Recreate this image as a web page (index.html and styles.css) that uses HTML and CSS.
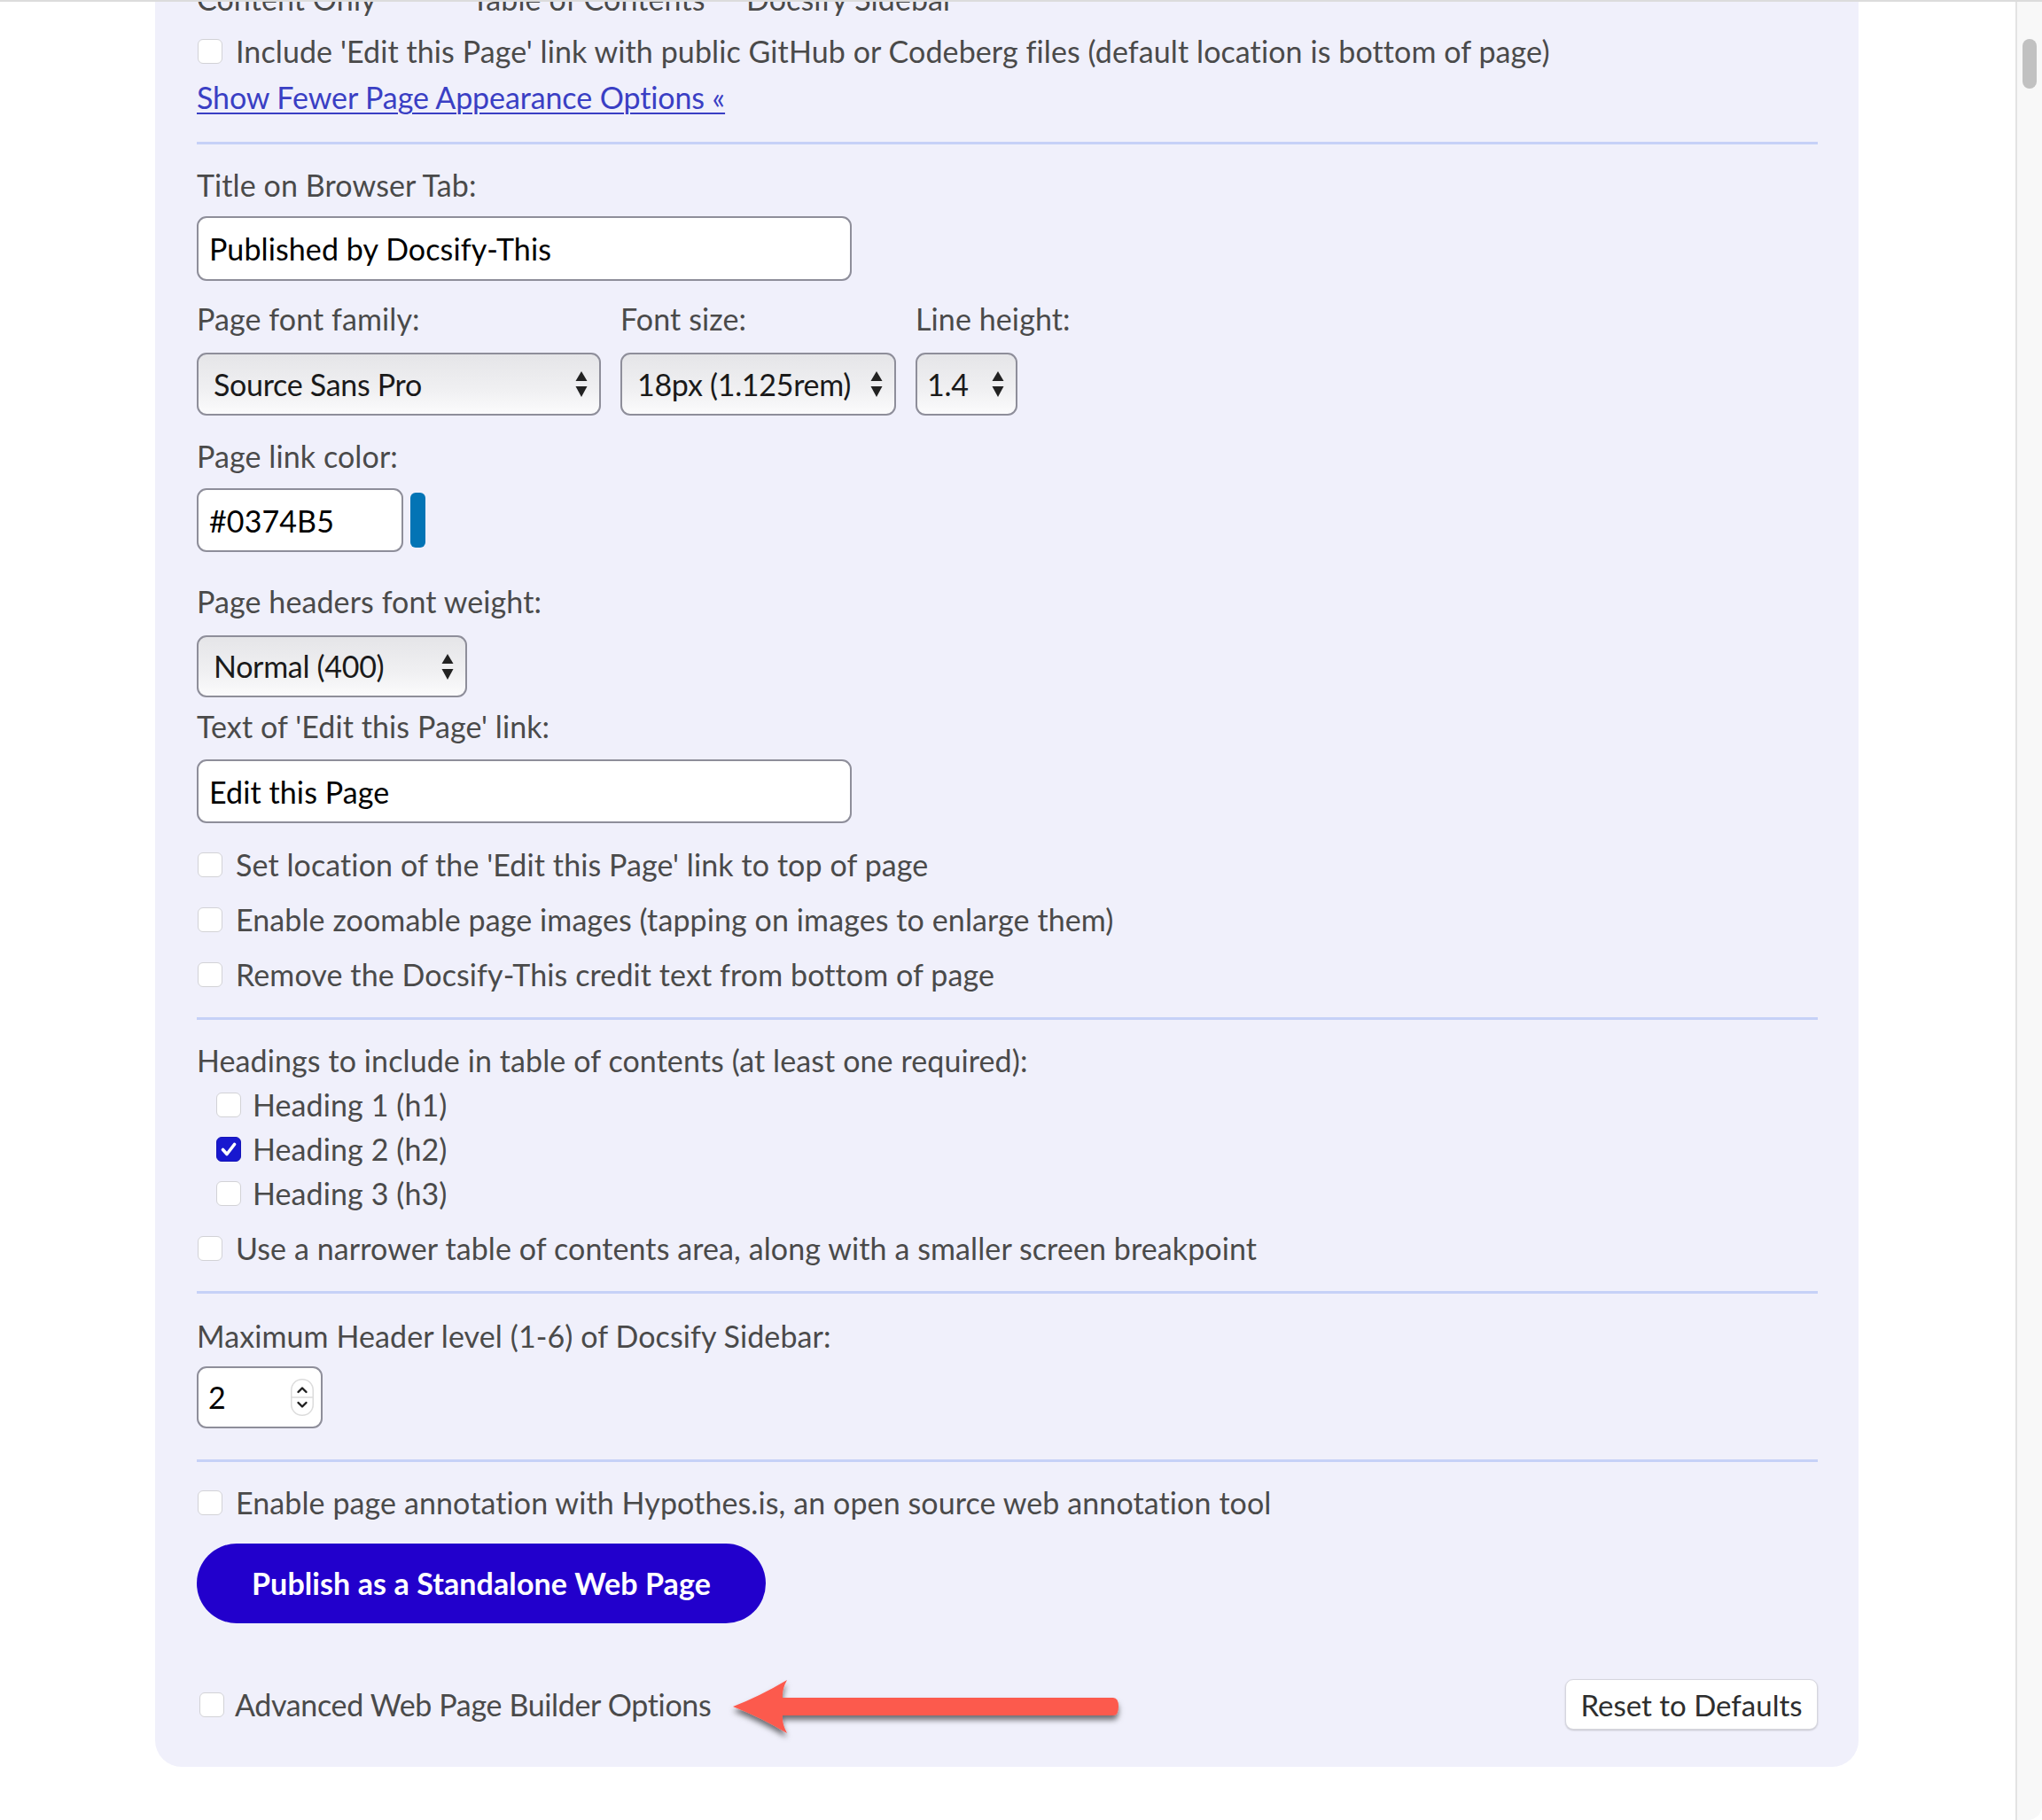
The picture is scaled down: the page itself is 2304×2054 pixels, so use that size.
FILE: index.html
```html
<!DOCTYPE html>
<html lang="en">
<head>
<meta charset="utf-8">
<title>Docsify-This Web Page Builder</title>
<link rel="stylesheet" href="styles.css">
</head>
<body>
<div class="frame">
  <main class="main">
    <section class="card">
      <div class="radio-labels">
        <span class="rl rl-1">Content Only</span>
        <span class="rl rl-2">Table of Contents</span>
        <span class="rl">Docsify Sidebar</span>
      </div>

      <label class="check-row mt-9"><span class="box"></span><span>Include 'Edit this Page' link with public GitHub or Codeberg files (default location is bottom of page)</span></label>
      <div class="link-line"><a class="more-link" href="#">Show Fewer Page Appearance Options «</a></div>

      <hr class="sep mt-25">

      <div class="label mt-21">Title on Browser Tab:</div>
      <input class="text-input wide mt-10" type="text" value="Published by Docsify-This">

      <div class="font-row">
        <div class="col">
          <div class="label">Page font family:</div>
          <div class="select sel-family"><span>Source Sans Pro</span><svg class="arrows" width="14" height="29" viewBox="0 0 14 29"><polygon points="0.5,11 7,0 13.5,11"/><polygon points="0.5,17 13.5,17 7,29"/></svg></div>
        </div>
        <div class="col">
          <div class="label">Font size:</div>
          <div class="select sel-size"><span>18px (1.125rem)</span><svg class="arrows" width="14" height="29" viewBox="0 0 14 29"><polygon points="0.5,11 7,0 13.5,11"/><polygon points="0.5,17 13.5,17 7,29"/></svg></div>
        </div>
        <div class="col">
          <div class="label">Line height:</div>
          <div class="select sel-line"><span>1.4</span><svg class="arrows" width="14" height="29" viewBox="0 0 14 29"><polygon points="0.5,11 7,0 13.5,11"/><polygon points="0.5,17 13.5,17 7,29"/></svg></div>
        </div>
      </div>

      <div class="label mt-21">Page link color:</div>
      <div class="color-row">
        <input class="text-input color-input" type="text" value="#0374B5">
        <span class="swatch"></span>
      </div>

      <div class="label mt-31">Page headers font weight:</div>
      <div class="select sel-weight"><span>Normal (400)</span><svg class="arrows" width="14" height="29" viewBox="0 0 14 29"><polygon points="0.5,11 7,0 13.5,11"/><polygon points="0.5,17 13.5,17 7,29"/></svg></div>

      <div class="label mt-8">Text of 'Edit this Page' link:</div>
      <input class="text-input wide h72 mt-12" type="text" value="Edit this Page">

      <label class="check-row mt-22"><span class="box"></span><span>Set location of the 'Edit this Page' link to top of page</span></label>
      <label class="check-row mt-12"><span class="box"></span><span>Enable zoomable page images (tapping on images to enlarge them)</span></label>
      <label class="check-row mt-12"><span class="box"></span><span>Remove the Docsify-This credit text from bottom of page</span></label>

      <hr class="sep mt-23">

      <div class="label mt-21">Headings to include in table of contents (at least one required):</div>
      <div class="headings">
        <label class="check-row"><span class="box"></span><span>Heading 1 (h1)</span></label>
        <label class="check-row"><span class="box checked"><svg width="28" height="28" viewBox="0 0 28 28"><path d="M7.5 14.5 L12 19.5 L20.5 8.5" fill="none" stroke="#fff" stroke-width="3.6" stroke-linecap="round" stroke-linejoin="round"/></svg></span><span>Heading 2 (h2)</span></label>
        <label class="check-row"><span class="box"></span><span>Heading 3 (h3)</span></label>
      </div>
      <label class="check-row mt-12"><span class="box"></span><span>Use a narrower table of contents area, along with a smaller screen breakpoint</span></label>

      <hr class="sep mt-23">

      <div class="label mt-23">Maximum Header level (1-6) of Docsify Sidebar:</div>
      <div class="number-input">
        <span>2</span>
        <svg class="spinner" width="26" height="42" viewBox="0 0 26 42"><rect x="0.75" y="0.75" width="24.5" height="40.5" rx="12" fill="#fff" stroke="#dcdcdc" stroke-width="1.5"/><line x1="1" y1="21" x2="25" y2="21" stroke="#dcdcdc" stroke-width="1.5"/><polyline points="8.5,15 13,10.5 17.5,15" fill="none" stroke="#1e1e1e" stroke-width="2.4" stroke-linecap="round" stroke-linejoin="round"/><polyline points="8.5,27 13,31.5 17.5,27" fill="none" stroke="#1e1e1e" stroke-width="2.4" stroke-linecap="round" stroke-linejoin="round"/></svg>
      </div>

      <hr class="sep mt-35">

      <label class="check-row mt-21"><span class="box"></span><span>Enable page annotation with Hypothes.is, an open source web annotation tool</span></label>

      <button class="publish" type="button">Publish as a Standalone Web Page</button>

      <div class="bottom-row">
        <label class="check-row adv"><span class="box"></span><span>Advanced Web Page Builder Options</span></label>
        <button class="reset" type="button">Reset to Defaults</button>
        <svg class="annot-arrow" width="460" height="82" viewBox="0 0 460 82">
          <defs>
            <filter id="ash" x="-10%" y="-30%" width="120%" height="180%">
              <feDropShadow dx="0" dy="5" stdDeviation="3" flood-color="#000" flood-opacity="0.55"/>
            </filter>
          </defs>
          <path filter="url(#ash)" fill="#fc5a4d" d="M7 36 Q 38 24 68 6 Q 62 17 63 26 L 436 26 Q 442 26 442 36 Q 442 46 436 46 L 63 46 Q 62 55 68 66 Q 38 48 7 36 Z"/>
        </svg>
      </div>
    </section>
  </main>
  <div class="scrollbar"><div class="thumb"></div></div>
</div>
</body>
</html>
```

FILE: styles.css
```css
html, body {
  margin: 0;
  padding: 0;
  background: #ffffff;
}

body {
  font-family: Lato, "Noto Sans", sans-serif;
  font-size: 34px;
  letter-spacing: 0.1px;
  line-height: 50px;
  color: #4a4a4a;
}

.frame {
  display: flex;
  height: 2054px;
  box-sizing: border-box;
  border-top: 2px solid #dcdcdc;
  overflow: hidden;
  border-bottom-right-radius: 16px;
}

.main {
  flex: 1;
  overflow: hidden;
  padding-left: 175px;
}

.card {
  width: 1922px;
  box-sizing: border-box;
  margin-top: -28px;
  padding: 0 46px 42px 47px;
  background: #f0f0fb;
  border-radius: 0 0 30px 30px;
}

/* spacing helpers */
.mt-8 { margin-top: 8px; }
.mt-9 { margin-top: 9px; }
.mt-10 { margin-top: 10px; }
.mt-12 { margin-top: 12px; }
.mt-21 { margin-top: 21px; }
.mt-22 { margin-top: 22px; }
.mt-23 { margin-top: 23px; }
.mt-25 { margin-top: 25px; }
.mt-31 { margin-top: 31px; }
.mt-35 { margin-top: 35px; }

.radio-labels {
  display: flex;
  height: 50px;
}
.rl-1, .rl-2 { width: 310px; }

.check-row {
  display: flex;
  align-items: center;
  height: 50px;
  color: #4a4a4a;
  white-space: nowrap;
}

.box {
  flex: none;
  width: 28px;
  height: 28px;
  box-sizing: border-box;
  margin-left: 1px;
  margin-right: 15px;
  background: #ffffff;
  border: 1.5px solid #d2d2d6;
  border-radius: 6px;
}
.box.checked {
  background: #1818cf;
  border-color: #1414b8;
  display: flex;
  align-items: center;
  justify-content: center;
}
.box.checked svg { margin: -1.5px; }

.link-line {
  margin-top: 2px;
  height: 50px;
}
.more-link {
  color: #3a3fc4;
  letter-spacing: -0.1px;
  text-decoration: underline;
  text-decoration-thickness: 2px;
  text-underline-offset: 4px;
}

.sep {
  border: 0;
  height: 3px;
  margin-bottom: 0;
  margin-left: 0;
  margin-right: 0;
  background: #c6d1f7;
}

.label {
  height: 50px;
  color: #4a4a4a;
  white-space: nowrap;
}

.text-input {
  display: block;
  box-sizing: border-box;
  font: inherit;
  letter-spacing: inherit;
  color: #000;
  background: #ffffff;
  border: 2px solid #8e8e9a;
  border-radius: 11px;
  padding: 0 12px;
  outline: none;
}
.wide {
  width: 739px;
  height: 73px;
}
.h72 { height: 72px; }

.font-row {
  display: flex;
  gap: 22px;
  margin-top: 18px;
}

.select {
  display: flex;
  align-items: center;
  box-sizing: border-box;
  height: 71px;
  margin-top: 13px;
  padding: 0 13px 0 17px;
  color: #1a1a1a;
  letter-spacing: -0.3px;
  border: 2px solid #8e8e9a;
  border-radius: 11px;
  background: linear-gradient(#e5e5e8, #f0f0f2 60%, #fbfbfc);
  white-space: nowrap;
}
.select .arrows {
  margin-left: auto;
  fill: #222;
}
.sel-family { width: 456px; }
.sel-size { width: 311px; }
.sel-line { width: 115px; padding-left: 11px; }
.sel-weight { width: 305px; height: 70px; }

.color-row {
  display: flex;
  align-items: center;
  gap: 8px;
  margin-top: 11px;
}
.color-input {
  width: 233px;
  height: 72px;
}
.swatch {
  width: 17px;
  height: 62px;
  border-radius: 6px;
  background: #0374B5;
}

.headings {
  padding-left: 21px;
}
.headings .box { margin-right: 13px; }

.number-input {
  display: flex;
  align-items: center;
  box-sizing: border-box;
  width: 142px;
  height: 70px;
  margin-top: 9px;
  padding: 0 8px 0 11px;
  color: #000;
  background: #ffffff;
  border: 2px solid #8e8e9a;
  border-radius: 11px;
}
.number-input .spinner { margin-left: auto; }

.publish {
  display: block;
  margin-top: 21px;
  width: 642px;
  height: 90px;
  border: 0;
  border-radius: 45px;
  background: #2200cc;
  color: #ffffff;
  font: inherit;
  letter-spacing: inherit;
  font-weight: 700;
  padding: 0;
  cursor: pointer;
}

.bottom-row {
  position: relative;
  display: flex;
  align-items: center;
  justify-content: space-between;
  margin-top: 63px;
  height: 57px;
}
.bottom-row .box { margin-left: 3px; margin-right: 12px; }
.adv { letter-spacing: -0.35px; }

.reset {
  width: 285px;
  height: 57px;
  box-sizing: border-box;
  font: inherit;
  font-size: 33px;
  color: #2e2e2e;
  background: #ffffff;
  border: 1px solid #d6d6de;
  border-radius: 9px;
  box-shadow: 0 1px 2px rgba(0, 0, 0, 0.18);
  padding: 0;
}

.annot-arrow {
  position: absolute;
  left: 598px;
  top: -5px;
}

.scrollbar {
  flex: none;
  width: 30px;
  box-sizing: border-box;
  background: #f8f8f8;
  border-left: 2px solid #e3e3e3;
  padding: 42px 0 0 6px;
}
.thumb {
  width: 16px;
  height: 56px;
  border-radius: 8px;
  background: #c1c1c1;
}
```
